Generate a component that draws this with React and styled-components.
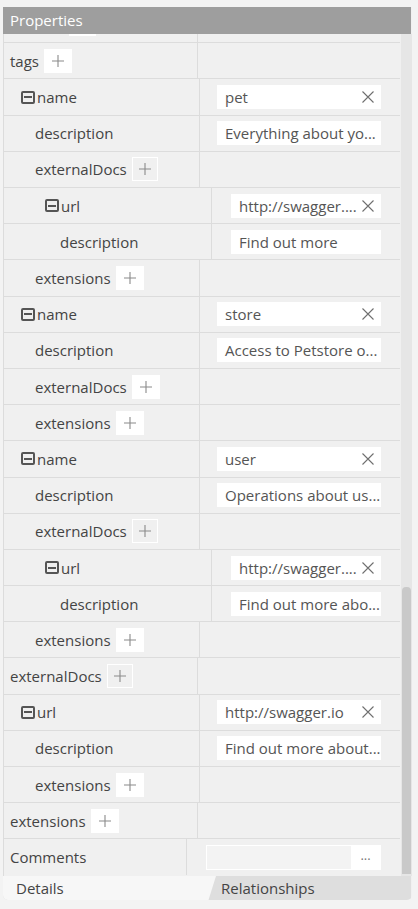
import React from 'react';
import styled, { createGlobalStyle } from 'styled-components';

const GlobalStyle = createGlobalStyle`
  html, body { margin: 0; padding: 0; background: #f3f3f3; }
  body { font-family: "Open Sans", "Liberation Sans", sans-serif; }
`;

const Panel = styled.div`
  margin: 7px 0 0 3px;
  width: 409px;
  height: 893px;
  display: flex;
  flex-direction: column;
  background: #f0f0f0;
  border-radius: 0 0 5px 5px;
  overflow: hidden;
`;

const Header = styled.div`
  height: 27px;
  width: 408px;
  background: #9e9e9e;
  color: #fff;
  font-size: 15px;
  line-height: 27px;
  padding-left: 7px;
  box-sizing: border-box;
`;

const Body = styled.div`
  flex: 1;
  display: flex;
  min-height: 0;
  border-left: 1px solid #dcdcdc;
`;

const Rows = styled.div`
  width: 397px;
  display: flex;
  flex-direction: column;
  overflow: hidden;
`;

const ScrollTrack = styled.div`
  width: 11px;
  background: #e6e6e6;
  display: flex;
  flex-direction: column;
  justify-content: flex-end;
  padding: 0 1px;
  box-sizing: border-box;
`;

const ScrollThumb = styled.div`
  height: 287px;
  margin-bottom: 2px;
  background: #c9c9c9;
  border-radius: 4px 4px 0 0;
`;

const Row = styled.div`
  display: grid;
  grid-template-columns: ${({ $left }) => $left}px minmax(0, 1fr);
  height: ${({ $h }) => $h || 36.2}px;
  box-sizing: border-box;
  border-bottom: ${({ $last }) => ($last ? 'none' : '1px solid #dcdcdc')};
  width: 396px;
  flex-shrink: 0;
`;

const LabelCell = styled.div`
  display: flex;
  align-items: center;
  padding-left: ${({ $pad }) => $pad}px;
  border-right: 1px solid #dcdcdc;
  color: #444;
  font-size: 15px;
  white-space: nowrap;
  overflow: hidden;
`;

const ValueCell = styled.div`
  display: flex;
  align-items: center;
  min-width: 0;
  padding: 0 19px 0 ${({ $pad }) => $pad}px;
`;

const Stub = styled.div`
  margin: 0 0 auto 65px;
  width: 27px;
  height: 2px;
  background: #fff;
`;

const Collapse = styled.span`
  width: 14px;
  height: 13px;
  box-sizing: border-box;
  border: 2px solid #555;
  border-radius: 2px;
  margin-right: 2px;
  display: flex;
  align-items: center;
  justify-content: center;
  &::after {
    content: '';
    width: 8px;
    height: 2px;
    background: #555;
  }
`;

const PlusButton = styled.span`
  margin-left: 5px;
  width: ${({ $outline }) => ($outline ? 26 : 28)}px;
  height: 24px;
  box-sizing: border-box;
  background: ${({ $outline }) => ($outline ? 'transparent' : '#fff')};
  border: 1px solid #fff;
  display: flex;
  align-items: center;
  justify-content: center;
  color: #8a8a8a;
`;

const Input = styled.div`
  flex: 1;
  min-width: 0;
  height: 24px;
  background: #fff;
  display: flex;
  align-items: center;
  justify-content: space-between;
  padding: 0 6px 0 8px;
  color: #555;
  font-size: 15px;
  white-space: nowrap;
  overflow: hidden;
`;

const CommentBox = styled.div`
  flex: 1;
  height: 25px;
  box-sizing: border-box;
  border: 1px solid #fff;
  display: flex;
`;

const CommentField = styled.div`
  flex: 1;
  background: #f3f3f3;
`;

const Ellipsis = styled.div`
  width: 29px;
  background: #fff;
  color: #777;
  font-size: 13px;
  display: flex;
  align-items: center;
  justify-content: center;
  padding-bottom: 4px;
  box-sizing: border-box;
`;

const Tabs = styled.div`
  height: 24px;
  display: flex;
  background: #dedede;
  width: 408px;
`;

const Tab = styled.div`
  display: flex;
  align-items: center;
  font-size: 15px;
  color: #444;
  padding-left: ${({ $pad }) => $pad}px;
  width: ${({ $w }) => ($w ? `${$w}px` : 'auto')};
  flex: ${({ $w }) => ($w ? 'none' : 1)};
  background: ${({ $active }) => ($active ? '#f7f7f7' : 'transparent')};
  clip-path: ${({ $active }) => ($active ? 'polygon(0 0, 100% 0, 96.5% 100%, 0 100%)' : 'none')};
  box-sizing: border-box;
`;

const PlusIcon = () => (
  <svg width="14" height="14" viewBox="0 0 14 14">
    <path d="M7 1v12M1 7h12" stroke="#8a8a8a" strokeWidth="1.1" fill="none" />
  </svg>
);

const ClearIcon = () => (
  <svg width="14" height="14" viewBox="0 0 14 14" style={{ flexShrink: 0 }}>
    <path d="M1.5 1.5l11 11M12.5 1.5l-11 11" stroke="#6f6f6f" strokeWidth="1.1" fill="none" />
  </svg>
);

const levels = {
  0: { divider: 197, text: 6, icon: 6, input: 0 },
  1: { divider: 199, text: 31, icon: 17, input: 217 },
  2: { divider: 211, text: 56, icon: 41, input: 231 },
};

const rows = [
  { level: 0, label: 'tags', plus: 'fill' },
  { level: 1, label: 'name', icon: true, value: 'pet', clear: true },
  { level: 1, label: 'description', value: 'Everything about yo...' },
  { level: 1, label: 'externalDocs', plus: 'outline' },
  { level: 2, label: 'url', icon: true, value: 'http://swagger....', clear: true },
  { level: 2, label: 'description', value: 'Find out more' },
  { level: 1, label: 'extensions', plus: 'fill' },
  { level: 1, label: 'name', icon: true, value: 'store', clear: true },
  { level: 1, label: 'description', value: 'Access to Petstore o...' },
  { level: 1, label: 'externalDocs', plus: 'fill' },
  { level: 1, label: 'extensions', plus: 'fill' },
  { level: 1, label: 'name', icon: true, value: 'user', clear: true },
  { level: 1, label: 'description', value: 'Operations about us...' },
  { level: 1, label: 'externalDocs', plus: 'outline' },
  { level: 2, label: 'url', icon: true, value: 'http://swagger....', clear: true },
  { level: 2, label: 'description', value: 'Find out more abo...' },
  { level: 1, label: 'extensions', plus: 'fill' },
  { level: 0, label: 'externalDocs', plus: 'outline' },
  { level: 1, label: 'url', icon: true, value: 'http://swagger.io', clear: true },
  { level: 1, label: 'description', value: 'Find out more about...' },
  { level: 1, label: 'extensions', plus: 'fill' },
  { level: 0, label: 'extensions', plus: 'fill' },
];

const PropertyRow = ({ row }) => {
  const lv = levels[row.level];
  const left = lv.divider - 3;
  const pad = row.icon ? lv.icon : lv.text;
  return (
    <Row $left={left}>
      <LabelCell $pad={pad}>
        {row.icon && <Collapse />}
        {row.label}
        {row.plus && (
          <PlusButton $outline={row.plus === 'outline'}>
            <PlusIcon />
          </PlusButton>
        )}
      </LabelCell>
      <ValueCell $pad={lv.input ? lv.input - lv.divider - 1 : 0}>
        {row.value && (
          <Input>
            <span>{row.value}</span>
            {row.clear && <ClearIcon />}
          </Input>
        )}
      </ValueCell>
    </Row>
  );
};

export default function App() {
  return (
    <>
      <GlobalStyle />
      <Panel>
        <Header>Properties</Header>
        <Body>
          <Rows>
            <Row $left={194} $h={9.3}>
              <LabelCell $pad={0}>
                <Stub />
              </LabelCell>
              <ValueCell $pad={0} />
            </Row>
            {rows.map((r, i) => (
              <PropertyRow key={i} row={r} />
            ))}
            <Row $left={183} $h={36} $last>
              <LabelCell $pad={6}>Comments</LabelCell>
              <ValueCell $pad={19}>
                <CommentBox>
                  <CommentField />
                  <Ellipsis>...</Ellipsis>
                </CommentBox>
              </ValueCell>
            </Row>
          </Rows>
          <ScrollTrack>
            <ScrollThumb />
          </ScrollTrack>
        </Body>
        <Tabs>
          <Tab $active $w={213} $pad={13}>Details</Tab>
          <Tab $pad={5}>Relationships</Tab>
        </Tabs>
      </Panel>
    </>
  );
}
